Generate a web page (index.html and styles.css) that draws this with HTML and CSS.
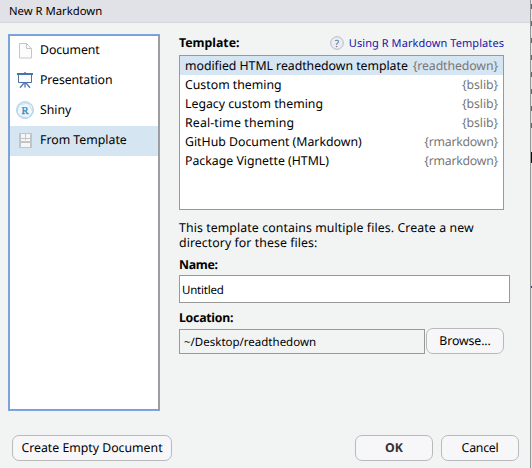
FILE: index.html
```
<!DOCTYPE html>
<html lang="en">
<head>
<meta charset="utf-8">
<title>New R Markdown</title>
<link rel="stylesheet" href="styles.css">
</head>
<body>
<main class="dialog">
  <header class="caption"><span class="t-caption">New R Markdown</span></header>
  <div class="content">
    <nav class="sidebar">
      <div class="item">
        <svg class="icon" width="20" height="20" viewBox="0 0 20 20"><path d="M4.5 2.5h7l5 5v9.5h-12z" fill="#fcfcfc" stroke="#c3c6c8"/><path d="M11.5 2.5v5h5" fill="none" stroke="#c3c6c8"/></svg>
        <span class="t-doc">Document</span>
      </div>
      <div class="item">
        <svg class="icon" width="20" height="20" viewBox="0 0 20 20"><path d="M2 2h16v2H2z" fill="#4a73aa"/><path d="M9 1h2v1H9z" fill="#7d9bc3"/><path d="M3.5 4v7.5h13V4" fill="#fbfcfe" stroke="#4a73aa"/><path d="M10 11v5.5M9 12l-4 4.8M11 12l4 4.8" fill="none" stroke="#5b7fae" stroke-width="1.4"/></svg>
        <span class="t-pres">Presentation</span>
      </div>
      <div class="item">
        <svg class="icon raised" width="20" height="20" viewBox="0 0 20 20"><circle cx="10" cy="10" r="8.4" fill="#f0f6fa" stroke="#9dc7df" stroke-width=".8"/><path d="M3 5l7-3 7 3 1 7-5 6H7l-5-6zM2 12l2-7 9-2 5 9-5 6-9-2z" fill="none" stroke="#b7d5e6" stroke-width=".7"/><circle cx="10" cy="10" r="5.3" fill="#edf7fc"/><text class="shiny" x="10" y="13.8" text-anchor="middle">R</text></svg>
        <span class="t-shiny">Shiny</span>
      </div>
      <div class="item selected">
        <svg class="icon raised" width="20" height="20" viewBox="0 0 20 20"><path d="M4 3h13v15H4z" fill="#c2c4c5"/><path d="M6 4h4v4H6zM11 4h4v4h-4zM6 9h9v2H6zM6 13h9v4H6z" fill="#f5f6f7"/><path d="M10.5 9v1" stroke="#c2c4c5"/></svg>
        <span class="t-from">From Template</span>
      </div>
    </nav>
    <section class="panel">
      <div class="heading">
        <b class="t-template">Template:</b>
        <span class="help"><svg width="14" height="14" viewBox="0 0 14 14"><circle cx="7" cy="7" r="6.3" fill="#e9eef4" stroke="#b4bbc3"/><text class="question" x="7" y="10.6" text-anchor="middle">?</text></svg><a class="t-link">Using R Markdown Templates</a></span>
      </div>
      <div class="list">
        <div class="row selected"><span class="t-r1">modified HTML readthedown template</span><span class="pkg t-read">{readthedown}</span></div>
        <div class="row"><span class="t-r2">Custom theming</span><span class="pkg t-bs">{bslib}</span></div>
        <div class="row"><span class="t-r3">Legacy custom theming</span><span class="pkg t-bs">{bslib}</span></div>
        <div class="row"><span class="t-r4">Real-time theming</span><span class="pkg t-bs">{bslib}</span></div>
        <div class="row"><span class="t-r5">GitHub Document (Markdown)</span><span class="pkg t-rm">{rmarkdown}</span></div>
        <div class="row"><span class="t-r6">Package Vignette (HTML)</span><span class="pkg t-rm">{rmarkdown}</span></div>
      </div>
      <p class="note"><span class="t-n1">This template contains multiple files. Create a new</span><span class="t-n2">directory for these files:</span></p>
      <b class="label t-name">Name:</b>
      <div class="field name"><span class="t-unt">Untitled</span></div>
      <b class="label location-label t-loc">Location:</b>
      <div class="chooser"><div class="field path"><span class="t-path">~/Desktop/readthedown</span></div><div class="button browse"><span class="t-browse">Browse...</span></div></div>
    </section>
  </div>
  <footer class="footer">
    <div class="button create"><span class="t-create">Create Empty Document</span></div>
    <div class="button ok"><span class="t-ok">OK</span></div>
    <div class="button cancel"><span class="t-cancel">Cancel</span></div>
  </footer>
</main>
<aside class="behind"><i></i><i></i><i></i><i></i><i></i><i></i><i></i><i></i><i class="block"></i><i class="dot"></i></aside>
</body>
</html>
```
FILE: styles.css
```
* { box-sizing: border-box; }
body { margin: 0; width: 532px; height: 468px; overflow: hidden; display: flex; background: #f2f4f4; color: #000; font: 12.3px/19px "Noto Sans", sans-serif; white-space: nowrap; text-rendering: geometricPrecision; }
.dialog { width: 531px; height: 468px; background: #f2f4f4; border-right: 1px solid #929496; display: flex; flex-direction: column; }
.caption { height: 23px; padding: 2px 0 0 9px; background: #e1e2e7; border-bottom: 1px solid #d6d8df; font-size: 11.3px; line-height: 19px; }
.content { display: flex; gap: 19px; padding: 11px 0 0 8px; height: 412px; }
.sidebar { width: 152px; height: 377px; background: #fff; border: 1px solid #7da4dc; box-shadow: inset 0 0 0 1px #999ba0; padding: 1px; }
.item { height: 30px; display: flex; align-items: center; gap: 5px; padding: 0 0 0 5px; }
.item span { margin-bottom: 3px; }
.raised { margin-bottom: 2px; }
.selected { background: #d6e5f2; }
.shiny { font: 10.5px "Liberation Serif", serif; fill: #2389c4; stroke: #2389c4; stroke-width: .3; }
.panel { width: 331px; }
.heading { height: 21px; width: 325px; display: flex; justify-content: space-between; line-height: 17px; }
.help { display: flex; align-items: center; gap: 5px; height: 18px; font-size: 11px; color: #1a12a6; }
.question { font: 10px "Noto Sans", sans-serif; fill: #5c6874; }
.list { width: 325px; height: 155px; border: 1px solid #999; background: #fff; }
.row { height: 19px; display: flex; justify-content: space-between; padding: 0 5px; }
.pkg { color: #777; }
.note { margin: 10px 0 0; line-height: 15px; }
.note span { display: block; }
.label { display: block; height: 19px; line-height: 17px; margin: 6px 0 0; }
.field { border: 1px solid #999; display: flex; align-items: center; font-size: 11.5px; }
.name { width: 331px; height: 28px; background: #fff; padding: 2px 0 0 2px; }
.chooser { display: flex; align-items: flex-end; gap: 1px; height: 26px; }
.path { width: 246px; height: 25px; padding: 1px 0 0 4px; }
.button { height: 26px; border: 1px solid #b9b9bb; border-radius: 7px; background: #f7f7f9; display: flex; align-items: center; justify-content: center; padding-bottom: 1px; }
.browse { width: 78px; }
.footer { display: flex; padding-left: 12px; gap: 8px; }
.create { width: 160px; margin-right: 175px; }
.ok, .cancel { width: 78px; }
.ok { font-weight: bold; color: #333; }
.t-doc, .t-pres, .t-read, .t-bs, .t-browse { letter-spacing: -.1px; }
.t-rm, .t-cancel, .t-loc { letter-spacing: -.25px; }
.t-name { letter-spacing: -.3px; }
.t-unt { letter-spacing: -.2px; }
.t-r1 { letter-spacing: -.03px; }
.t-r4 { letter-spacing: .15px; }
.t-n1 { letter-spacing: .1px; }
.t-n2, .t-link { letter-spacing: .07px; }
.behind { width: 1px; height: 468px; background: #e4e6e6; display: flex; flex-direction: column; gap: 12px; padding-top: 4px; }
.behind i { height: 5px; background: #666; }
.behind .block { height: 11px; margin-top: 12px; background: #111; }
.behind .dot { height: 2px; margin-top: 111px; background: #447; }
```
